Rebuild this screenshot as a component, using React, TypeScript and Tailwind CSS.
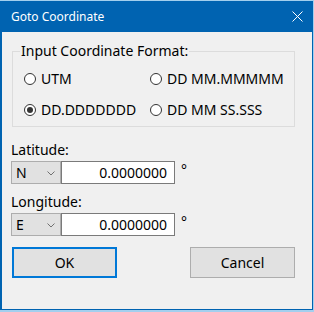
function Radio({ label, checked }: { label: string; checked?: boolean }) {
  return (
    <label className="flex items-center gap-[5px] h-[31px]">
      <span className="w-[12px] h-[12px] rounded-full border border-[#333333] bg-white flex items-center justify-center">
        {checked && <span className="w-[6px] h-[6px] rounded-full bg-[#333333]" />}
      </span>
      <span>{label}</span>
    </label>
  );
}

function CoordRow({ hemi }: { hemi: string }) {
  return (
    <div className="flex items-center">
      <div className="w-[50px] h-full bg-[#e1e1e1] border border-[#adadad] flex items-center justify-between pl-[4px] pr-[5px]">
        <span>{hemi}</span>
        <svg width="8" height="5" viewBox="0 0 8 5" className="mt-px">
          <path d="M0.5 0.5 L4 4 L7.5 0.5" fill="none" stroke="#707070" strokeWidth="1" />
        </svg>
      </div>
      <div className="w-[114px] h-full bg-white border border-[#7a7a7a] flex items-center justify-end pr-[7px]">
        0.0000000
      </div>
      <span className="ml-[6px] text-[14px] -mt-[6px]">°</span>
    </div>
  );
}

export default function App() {
  return (
    <div className="w-[314px] h-[312px] bg-[#a3cfee] pt-px">
      <div
        className="w-[313px] h-[309px] bg-[#f0f0f0] border-l-2 border-r border-b border-[#0063b1] flex flex-col text-black text-[14px]"
        style={{ fontFamily: '"Noto Sans", sans-serif' }}
      >
        <div className="h-[31px] bg-[#0063b1] text-white flex items-center justify-between pl-[9px] pr-[9px] shrink-0">
          <span className="text-[12px]">Goto Coordinate</span>
          <svg width="11" height="11" viewBox="0 0 11 11">
            <path d="M0.5 0.5 L10.5 10.5 M10.5 0.5 L0.5 10.5" stroke="#ffffff" strokeWidth="1" />
          </svg>
        </div>

        <div className="pl-[9px] flex flex-col">
          <fieldset className="ml-px mt-[9px] w-[283px] border border-[#dcdcdc] pl-[11px] pt-[2px] pb-px">
            <legend className="-ml-[4px] px-[1px] leading-[20px]">Input Coordinate Format:</legend>
            <div className="grid grid-cols-[126px_1fr]">
              <Radio label="UTM" />
              <Radio label="DD MM.MMMMM" />
              <Radio label="DD.DDDDDDD" checked />
              <Radio label="DD MM SS.SSS" />
            </div>
          </fieldset>

          <div className="mt-[13px] h-[20px] leading-[20px]">Latitude:</div>
          <div className="mt-px h-[26px]">
            <CoordRow hemi="N" />
          </div>
          <div className="mt-[5px] h-[20px] leading-[20px]">Longitude:</div>
          <div className="mt-px h-[27px]">
            <CoordRow hemi="E" />
          </div>

          <div className="mt-[7px] flex gap-[73px] pl-px">
            <button className="w-[105px] h-[31px] bg-[#e1e1e1] border-2 border-[#0078d7]">OK</button>
            <button className="w-[105px] h-[31px] bg-[#e1e1e1] border border-[#adadad]">Cancel</button>
          </div>
        </div>
      </div>
    </div>
  );
}
